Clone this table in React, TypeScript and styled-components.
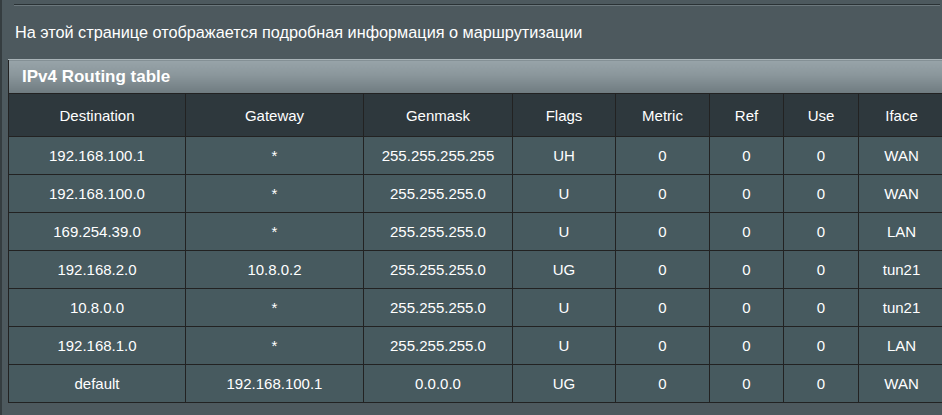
import React from "react";
import styled, { createGlobalStyle } from "styled-components";

const Global = createGlobalStyle`
  html, body { margin: 0; padding: 0; background: #4d595e; }
  body { font-family: "Liberation Sans", Arial, sans-serif; }
`;

const Page = styled.div`
  width: 942px;
  height: 415px;
  box-sizing: border-box;
  background: #4d595e;
  border-left: 2px solid #353d40;
  padding: 4px 0 0 6px;
  overflow: hidden;
`;

const Rule = styled.div`
  margin-left: 6px;
  width: 926px;
  height: 1px;
  background: #2a3235;
  border-bottom: 1px solid #6c787d;
`;

const Intro = styled.p`
  margin: 0;
  padding: 17px 0 0 7px;
  height: 36px;
  font-size: 16.25px;
  line-height: 18px;
  color: #ffffff;
`;

const Table = styled.table`
  border-collapse: collapse;
  width: 936px;
  table-layout: fixed;
  border: 1px solid #222;
`;

const TitleCell = styled.th`
  height: 33px;
  padding: 0 0 0 13px;
  text-align: left;
  font-size: 17px;
  font-weight: bold;
  color: #ffffff;
  background: linear-gradient(to bottom, #98a4a9 0%, #8a969b 45%, #6f7b80 100%);
  border: 1px solid #222;
  border-top: 1px solid #a8b3b7;
`;

const HeadCell = styled.th`
  height: 42px;
  padding: 0;
  font-size: 15px;
  font-weight: normal;
  color: #ffffff;
  background: #2e383d;
  border: 1px solid #222;
`;

const Cell = styled.td`
  height: 37px;
  padding: 0;
  text-align: center;
  font-size: 15px;
  color: #ffffff;
  background: #475a5f;
  border: 1px solid #222;
`;

const columns = [
  { name: "Destination", w: 177 },
  { name: "Gateway", w: 178 },
  { name: "Genmask", w: 149 },
  { name: "Flags", w: 103 },
  { name: "Metric", w: 94 },
  { name: "Ref", w: 74 },
  { name: "Use", w: 75 },
  { name: "Iface", w: 86 },
];

const rows = [
  ["192.168.100.1", "*", "255.255.255.255", "UH", "0", "0", "0", "WAN"],
  ["192.168.100.0", "*", "255.255.255.0", "U", "0", "0", "0", "WAN"],
  ["169.254.39.0", "*", "255.255.255.0", "U", "0", "0", "0", "LAN"],
  ["192.168.2.0", "10.8.0.2", "255.255.255.0", "UG", "0", "0", "0", "tun21"],
  ["10.8.0.0", "*", "255.255.255.0", "U", "0", "0", "0", "tun21"],
  ["192.168.1.0", "*", "255.255.255.0", "U", "0", "0", "0", "LAN"],
  ["default", "192.168.100.1", "0.0.0.0", "UG", "0", "0", "0", "WAN"],
];

export default function App() {
  return (
    <>
      <Global />
      <Page>
        <Rule />
        <Intro>На этой странице отображается подробная информация о маршрутизации</Intro>
        <Table>
          <colgroup>
            {columns.map((c) => (
              <col key={c.name} style={{ width: c.w }} />
            ))}
          </colgroup>
          <thead>
            <tr>
              <TitleCell colSpan={8}>IPv4 Routing table</TitleCell>
            </tr>
            <tr>
              {columns.map((c) => (
                <HeadCell key={c.name}>{c.name}</HeadCell>
              ))}
            </tr>
          </thead>
          <tbody>
            {rows.map((r, i) => (
              <tr key={i}>
                {r.map((v, j) => (
                  <Cell key={j}>{v}</Cell>
                ))}
              </tr>
            ))}
          </tbody>
        </Table>
      </Page>
    </>
  );
}
